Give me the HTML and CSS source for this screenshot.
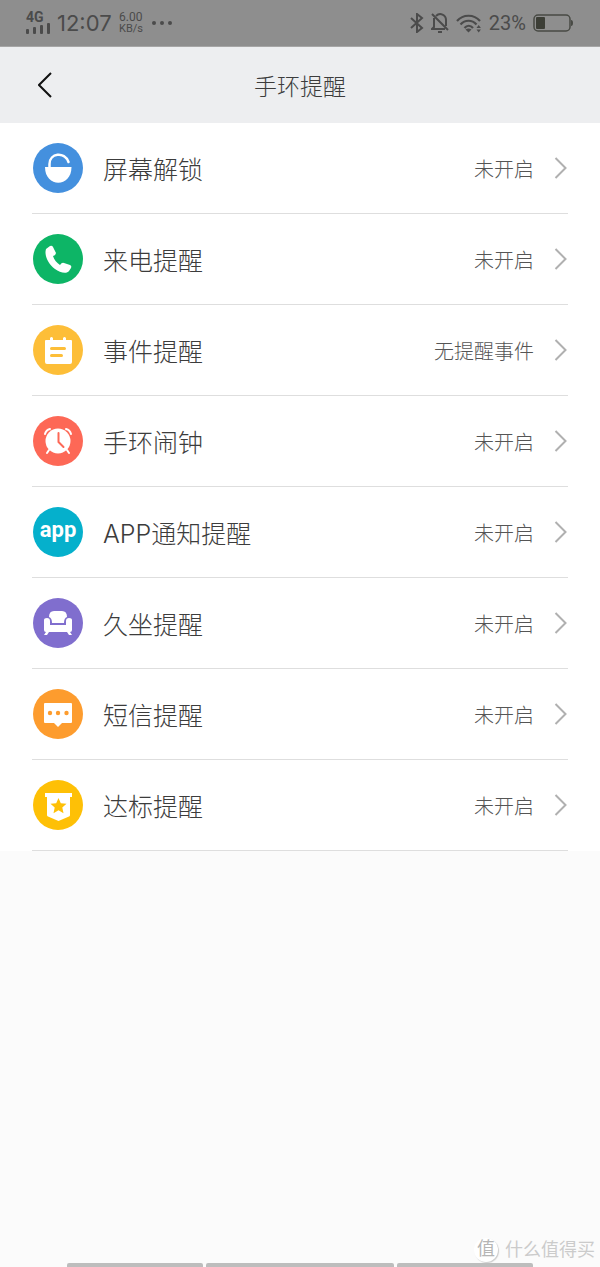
FILE: index.html
```
<!DOCTYPE html>
<html lang="zh-CN">
<head>
    <meta charset="UTF-8">
    <meta name="viewport" content="width=device-width, initial-scale=1.0">
    <title>手环提醒</title>
    <link rel="stylesheet" href="styles.css">
</head>
<body>
    <div class="status-bar">
        <div class="signal">
            <span class="network">4G</span>
            <svg width="24" height="11" viewBox="0 0 24 11" fill="currentColor">
                <rect x="0" y="6" width="3" height="5" rx="1"/>
                <rect x="7" y="4" width="3" height="7" rx="1"/>
                <rect x="14" y="2" width="3" height="9" rx="1"/>
                <rect x="21" y="0" width="3" height="11" rx="1"/>
            </svg>
        </div>
        <span class="time">12:07</span>
        <div class="speed"><span>6.00</span><span>KB/s</span></div>
        <svg width="20" height="4" viewBox="0 0 20 4" fill="currentColor">
            <circle cx="2" cy="2" r="2"/><circle cx="10" cy="2" r="2"/><circle cx="18" cy="2" r="2"/>
        </svg>
        <div class="status-right">
            <svg width="14" height="20" viewBox="0 0 14 20" fill="none" stroke="currentColor" stroke-width="2">
                <path d="M1 5l11 10-5 4V1l5 4L1 15"/>
            </svg>
            <svg width="18" height="20" viewBox="0 0 18 20" fill="none" stroke="currentColor" stroke-width="2">
                <path d="M3 5v9l-2 2h13M5 3c4-4 10-1 10 4v6M1 1l16 16M7 19h4"/>
            </svg>
            <svg width="26" height="19" viewBox="0 0 26 19" fill="none" stroke="currentColor" stroke-width="2.200">
                <path d="M1 7c6-7 17-7 23 0M4.500 10.500c4.500-5 11.500-5 16 0M8.500 14c2.500-3 6-3 8.500 0"/>
                <path d="M9.500 15.500q3-2 6 0l-3 3z" fill="currentColor" stroke="none"/>
                <path d="M20.500 14l2.200-3 2.200 3zM20.500 15.500l2.200 3 2.200-3z" fill="currentColor" stroke="none"/>
            </svg>
            <span class="percent">23%</span>
            <svg width="40" height="18" viewBox="0 0 40 18">
                <rect x="1" y="1" width="36" height="16" rx="4" fill="none" stroke="#484a44" stroke-width="1.500"/>
                <rect x="3" y="3" width="9" height="12" rx="1" fill="#3c3e36"/>
                <path d="M38 6q2 0 2 3t-2 3z" fill="#484a44"/>
            </svg>
        </div>
    </div>

    <header class="header">
        <button class="back" aria-label="返回">
            <svg width="14" height="26" viewBox="0 0 14 26" fill="none" stroke="#111" stroke-width="2">
                <path d="M13 1L1 13l12 12"/>
            </svg>
        </button>
        <h1>手环提醒</h1>
    </header>

    <main class="list">
        <a class="row" href="#unlock">
            <svg class="icon" viewBox="0 0 50 50">
                <circle cx="25" cy="25" r="25" fill="#4490de"/>
                <path d="M12 24h26.500c0 21-26.500 21-26.500 0z" fill="#fff"/>
                <path d="M16.500 25v-4c0-11 15-13 19-2" fill="none" stroke="#fff" stroke-width="2.500" stroke-linecap="round"/>
            </svg>
            <span class="name">屏幕解锁</span>
            <span class="value">未开启</span>
            <svg class="arrow" viewBox="0 0 12 22"><path d="M1 1l10 10L1 21"/></svg>
        </a>
        <a class="row" href="#call">
            <svg class="icon" viewBox="0 0 50 50">
                <circle cx="25" cy="25" r="25" fill="#0db566"/>
                <path d="M13 15l4-3q2-1 3 1l3 6q0 2-3 3c1 4 4 7 7 9q2-3 4-2l6 2q2 1 1 3l-2 3c-2 3-9 2-14-2-7-5-11-14-9-20z" fill="#fff"/>
            </svg>
            <span class="name">来电提醒</span>
            <span class="value">未开启</span>
            <svg class="arrow" viewBox="0 0 12 22"><path d="M1 1l10 10L1 21"/></svg>
        </a>
        <a class="row" href="#event">
            <svg class="icon" viewBox="0 0 50 50">
                <circle cx="25" cy="25" r="25" fill="#fdbe38"/>
                <path d="M12 16q0-1 1-1h4v-2q1.500-2 3 0v2h10v-2q1.500-2 3 0v2h5q1 0 1 1v21q0 2-2 2H14q-2 0-2-2z" fill="#fff"/>
                <path d="M18.500 23.500h13M18.500 30.500h10" stroke="#fdbe38" stroke-width="3" stroke-linecap="round"/>
            </svg>
            <span class="name">事件提醒</span>
            <span class="value">无提醒事件</span>
            <svg class="arrow" viewBox="0 0 12 22"><path d="M1 1l10 10L1 21"/></svg>
        </a>
        <a class="row" href="#alarm">
            <svg class="icon" viewBox="0 0 50 50">
                <circle cx="25" cy="25" r="25" fill="#fd6856"/>
                <circle cx="25" cy="25" r="12.500" fill="#fff"/>
                <path d="M12 18q1-4 5-5M38 18q-1-4-5-5M16 34l-2 3M34 34l2 3" fill="none" stroke="#fff" stroke-width="2" stroke-linecap="round"/>
                <path d="M25.500 17v9l5 5" fill="none" stroke="#fd6856" stroke-width="2" stroke-linecap="round" stroke-linejoin="round"/>
            </svg>
            <span class="name">手环闹钟</span>
            <span class="value">未开启</span>
            <svg class="arrow" viewBox="0 0 12 22"><path d="M1 1l10 10L1 21"/></svg>
        </a>
        <a class="row" href="#app">
            <span class="icon app-icon">app</span>
            <span class="name">APP通知提醒</span>
            <span class="value">未开启</span>
            <svg class="arrow" viewBox="0 0 12 22"><path d="M1 1l10 10L1 21"/></svg>
        </a>
        <a class="row" href="#sit">
            <svg class="icon" viewBox="0 0 50 50">
                <circle cx="25" cy="25" r="25" fill="#806ece"/>
                <path d="M16 19q0-6 5-6h8q5 0 5 6-3 1-3 6H19q0-5-3-6z" fill="#fff"/>
                <path d="M11 22q0-2 3-2 3 0 3 3v4h16v-4q0-3 3-3t3 2v10q0 2-2 2l2 3h-3l-2-3H16l-2 3h-3l2-3q-2 0-2-2z" fill="#fff"/>
            </svg>
            <span class="name">久坐提醒</span>
            <span class="value">未开启</span>
            <svg class="arrow" viewBox="0 0 12 22"><path d="M1 1l10 10L1 21"/></svg>
        </a>
        <a class="row" href="#sms">
            <svg class="icon" viewBox="0 0 50 50">
                <circle cx="25" cy="25" r="25" fill="#fd9c2e"/>
                <path d="M12 14h26q1 0 1 1v18q0 1-1 1h-9l-4 4-4-4h-9q-1 0-1-1V15q0-1 1-1z" fill="#fff"/>
                <g fill="#fd9c2e"><circle cx="17" cy="24" r="2.200"/><circle cx="25" cy="24" r="2.200"/><circle cx="33.500" cy="24" r="2.200"/></g>
            </svg>
            <span class="name">短信提醒</span>
            <span class="value">未开启</span>
            <svg class="arrow" viewBox="0 0 12 22"><path d="M1 1l10 10L1 21"/></svg>
        </a>
        <a class="row" href="#goal">
            <svg class="icon" viewBox="0 0 50 50">
                <circle cx="25" cy="25" r="25" fill="#fec006"/>
                <path d="M12 13h27v4h-2v18q0 1-1 1.500L25.500 41 15 36.500q-1-.5-1-1.500V17h-2z" fill="#fff"/>
                <path d="M25.500 18l2.300 5.200 5.700.600-4.200 3.800 1.200 5.600-5-2.900-5 2.900 1.200-5.600-4.200-3.800 5.700-.600z" fill="#fec006"/>
            </svg>
            <span class="name">达标提醒</span>
            <span class="value">未开启</span>
            <svg class="arrow" viewBox="0 0 12 22"><path d="M1 1l10 10L1 21"/></svg>
        </a>
    </main>

    <footer class="nav-bar">
        <span></span><span></span><span></span>
    </footer>

    <div class="watermark">
        <span class="badge">值</span>
        <span>什么值得买</span>
    </div>
</body>
</html>
```
FILE: styles.css
```
* {
    box-sizing: border-box;
}

body {
    margin: 0;
    min-height: 100vh;
    display: flex;
    flex-direction: column;
    position: relative;
    background: #fbfbfb;
    color: #3c3c3c;
    font-family: Inter, "Noto Sans CJK SC", sans-serif;
    font-weight: 300;
}

svg {
    display: block;
    flex-shrink: 0;
}

.status-bar {
    display: flex;
    align-items: center;
    height: 47px;
    padding: 0 27px 0 26px;
    background: #8e8e8e;
    border-bottom: 1px solid #a6a6a6;
    color: #4b4b4b;
    font-family: Roboto, sans-serif;
    font-weight: 400;
}

.signal {
    width: 24px;
    margin-right: 7px;
}

.network {
    display: block;
    font-size: 14px;
    line-height: 11px;
    font-weight: 700;
}

.time {
    width: 56px;
    margin-right: 6px;
    font-family: Inter, sans-serif;
    font-size: 22px;
}

.speed {
    display: flex;
    flex-direction: column;
    width: 27px;
    margin-right: 6px;
    font-size: 11px;
    line-height: 12px;
}

.speed span:first-child {
    font-size: 12px;
}

.status-right {
    display: flex;
    align-items: center;
    gap: 7px;
    margin-left: auto;
}

.percent {
    font-size: 20px;
}

.header {
    display: grid;
    grid-template-columns: 60px 1fr 60px;
    align-items: center;
    height: 76px;
    background: #edeef0;
}

.header h1 {
    margin: 0;
    text-align: center;
    font-size: 23px;
    font-weight: 300;
}

.back {
    justify-self: end;
    padding: 8px;
    border: none;
    background: none;
    cursor: pointer;
}

.list {
    padding: 0 32px;
    background: #fff;
}

.row {
    display: flex;
    align-items: center;
    height: 91px;
    padding: 0 1px;
    border-bottom: 1px solid #dedede;
    color: inherit;
    text-decoration: none;
}

.icon {
    width: 50px;
    height: 50px;
    flex-shrink: 0;
    margin-right: 20px;
}

.app-icon {
    border-radius: 50%;
    background: #05b0cc;
    color: #fff;
    text-align: center;
    font-family: Roboto, sans-serif;
    font-size: 22px;
    font-weight: 700;
    line-height: 46px;
}

.name {
    flex: 1;
    font-size: 25px;
}

.value {
    margin-right: 20px;
    font-size: 20px;
    color: #555;
}

.arrow {
    width: 13px;
    height: 22px;
    fill: none;
    stroke: #b0b0b0;
    stroke-width: 2;
}

.nav-bar {
    display: grid;
    grid-template-columns: 68fr 94fr 68fr;
    gap: 3px;
    margin-top: auto;
    padding: 0 67px;
}

.nav-bar span {
    height: 4px;
    border-radius: 2px 2px 0 0;
    background: #bdbdbd;
}

.watermark {
    position: absolute;
    right: 5px;
    bottom: 4px;
    display: flex;
    align-items: center;
    gap: 7px;
    font-size: 18px;
    line-height: 26px;
    font-weight: 400;
    color: #cbcbcb;
}

.badge {
    width: 24px;
    height: 24px;
    border-radius: 50%;
    background: #fff;
    box-shadow: 1px 1px 1px #ccc;
    text-align: center;
    line-height: 22px;
    color: #b5b5b5;
}
```
